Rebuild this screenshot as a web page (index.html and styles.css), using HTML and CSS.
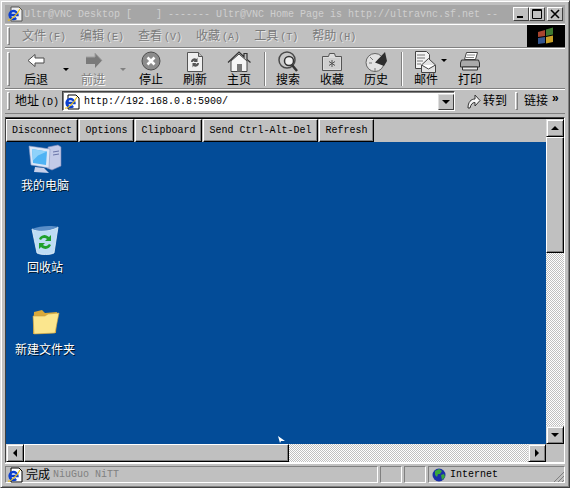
FILE: index.html
```html
<!DOCTYPE html>
<html lang="zh">
<head>
<meta charset="utf-8">
<title>Ultr@VNC Desktop</title>
<link rel="stylesheet" href="styles.css">
</head>
<body>
<div class="window">
  <header class="titlebar">
    <svg class="ie-small" viewBox="0 0 16 16"><path d="M4 1h8l3 3v11H4z" fill="#eee" stroke="#555"/><use href="#ie"/></svg>
    <span class="title-text">Ultr@VNC Desktop [    ] ------- Ultr@VNC Home Page is http://ultravnc.sf.net --</span>
    <div class="caption">
      <span class="cap-btn"><svg viewBox="0 0 14 12"><rect x="3" y="8" width="6" height="2" fill="#000"/></svg></span>
      <span class="cap-btn"><svg viewBox="0 0 14 12"><path d="M2.500 1.500h9v9h-9z M2 2.500h10" fill="none" stroke="#000"/></svg></span>
      <span class="cap-btn cap-close"><svg viewBox="0 0 14 12"><path d="M3 2l8 8M11 2l-8 8" stroke="#000" stroke-width="1.600"/></svg></span>
    </div>
  </header>

  <nav class="menubar band">
    <i class="grip"></i>
    <div class="menus">
      <span class="menu">文件<em>(F)</em></span>
      <span class="menu">编辑<em>(E)</em></span>
      <span class="menu">查看<em>(V)</em></span>
      <span class="menu">收藏<em>(A)</em></span>
      <span class="menu">工具<em>(T)</em></span>
      <span class="menu">帮助<em>(H)</em></span>
    </div>
    <div class="flag">
      <svg viewBox="0 0 20 20" width="20" height="20"><path d="M2 6l7-2v6l-7 1z" fill="#a8452f"/><path d="M10 3.500l7-2v7l-7 1.500z" fill="#3f7a32"/><path d="M2 12l7-1v6l-7 1z" fill="#34558f"/><path d="M10 11l7-1.500v6.500l-7 1.500z" fill="#c8a028"/></svg>
    </div>
  </nav>

  <section class="toolbar band">
    <i class="grip"></i>
    <div class="tool wide">
      <svg viewBox="0 0 24 22"><path d="M11 3.500L4 9.500l7 6v-3.500h9V7h-9z" fill="#fff" stroke="#4a4a4a"/></svg>
      <span>后退</span><b class="drop"></b>
    </div>
    <div class="tool wide off">
      <svg viewBox="0 0 24 22"><path d="M14 2l7 7.500-7 7.500v-4H5V6h9z" fill="#7a7a7a"/><path d="M5 6h9V2l7 7.500" fill="none" stroke="#a0a0a0"/></svg>
      <span>前进</span><b class="drop"></b>
    </div>
    <div class="tool">
      <svg viewBox="0 0 24 22"><circle cx="12" cy="10" r="9" fill="#8c8c8c" stroke="#4d4d4d"/><path d="M8.500 6.500l7 7M15.500 6.500l-7 7" stroke="#fff" stroke-width="2.600"/></svg>
      <span>停止</span>
    </div>
    <div class="tool">
      <svg viewBox="0 0 24 22"><path d="M4.500 1.500h11l4 4v15h-15z" fill="#efefef" stroke="#555"/><path d="M15.500 1.500v4h4" fill="#bbb" stroke="#555"/><path d="M8 11a3.500 3.500 0 0 1 5.500-3l1-1.500V11h-4l1.200-1.300a2 2 0 0 0-2 1.300M16 12a3.500 3.500 0 0 1-5.500 3l-1 1.500V12h4l-1.200 1.300a2 2 0 0 0 2-1.300" fill="#555"/></svg>
      <span>刷新</span>
    </div>
    <div class="tool">
      <svg viewBox="0 0 24 22"><path d="M4 10v10.500h16V10L12 3z" fill="#f5f5f5" stroke="#444"/><path d="M1 11.500L12 1l5 4.800V2.500h3v6l3.500 3" fill="none" stroke="#333" stroke-width="1.200"/><rect x="10" y="13" width="5" height="7.500" fill="#777"/></svg>
      <span>主页</span>
    </div>
    <i class="sep"></i>
    <div class="tool">
      <svg viewBox="0 0 24 22"><circle cx="11" cy="9" r="8" fill="#c8c8c8" stroke="#4a4a4a" stroke-width="1.500"/><circle cx="13" cy="10" r="4.500" fill="#eee" stroke="#333" stroke-width="1.500"/><path d="M16 14l5 6" stroke="#333" stroke-width="2.500"/></svg>
      <span>搜索</span>
    </div>
    <div class="tool">
      <svg viewBox="0 0 24 22"><path d="M2.500 5.500h6l1-3h5l1 3h6v14h-19z" fill="#dcdcdc" stroke="#555"/><rect x="4" y="7" width="16" height="11" fill="#cfcfcf"/><path d="M12 9v7M9 10.500l6 4M15 10.500l-6 4" stroke="#555"/></svg>
      <span>收藏</span>
    </div>
    <div class="tool">
      <svg viewBox="0 0 24 22"><circle cx="11" cy="11.500" r="9" fill="#e2e2e2" stroke="#666"/><path d="M11 11.500L21 1l2 9-3 5z" fill="#2d2d2d"/><path d="M5 12h3M11 17v3M6 6l3 3" stroke="#777"/></svg>
      <span>历史</span>
    </div>
    <i class="sep"></i>
    <div class="tool mail">
      <svg viewBox="0 0 24 22"><path d="M1.500 .500h11l3 3v14h-14z" fill="#f2f2f2" stroke="#444"/><path d="M3 4h8M3 7h8M3 10h6M3 13h4" stroke="#777"/><path d="M7.500 14l7-6.500 7 6.500v7.500h-14z" fill="#e2e2e2" stroke="#444"/><path d="M7.500 14l7 4 7-4" fill="#fff" stroke="#444"/></svg>
      <span>邮件</span><b class="drop"></b>
    </div>
    <div class="tool">
      <svg viewBox="0 0 24 22"><path d="M8.500 1.500h11l-2 7h-11z" fill="#fff" stroke="#444"/><path d="M9 4h8M8 6.500h8" stroke="#888"/><path d="M3.500 9h17l1 3v4h-19v-4z" fill="#aaa" stroke="#333"/><path d="M4.500 16h15v3h-15z" fill="#e8e8e8" stroke="#333"/></svg>
      <span>打印</span>
    </div>
  </section>

  <section class="addressbar band">
    <i class="grip"></i>
    <span class="addr-label">地址<em>(D)</em></span>
    <div class="addr-box">
      <svg class="ie-page" viewBox="0 0 16 16"><path d="M4 1h8l3 3v11H4z" fill="#fff" stroke="#000"/><use href="#ie"/></svg>
      <span class="url">http://192.168.0.8:5900/</span>
      <span class="combo"><b></b></span>
    </div>
    <span class="go"><svg viewBox="0 0 16 16" width="16" height="16"><path d="M2 15c0-6 3-9 7-9V2l5 5.500L9 13V9.500c-3 0-4 2-5 5.500z" fill="#f5f5f5" stroke="#333"/></svg><span>转到</span></span>
    <i class="grip grip-links"></i>
    <span class="links">链接</span><span class="chev">»</span>
  </section>

  <main class="frame">
    <div class="view">
      <div class="vnc-bar">
        <button class="vnc-btn">Disconnect</button>
        <button class="vnc-btn">Options</button>
        <button class="vnc-btn">Clipboard</button>
        <button class="vnc-btn">Send Ctrl-Alt-Del</button>
        <button class="vnc-btn">Refresh</button>
      </div>
      <div class="desktop">
        <div class="icon icon-pc">
          <svg viewBox="0 0 34 32"><path d="M20 4l10-2 3 2v19l-9 4-5-2z" fill="#c3cae8" stroke="#7b86b8" stroke-width=".6"/><path d="M25 9l6-1M25 12l6-1" stroke="#6a74a8"/><path d="M1 3l21 3-1 19-18-3z" fill="#dbe6f7" stroke="#8a9ac4" stroke-width=".6"/><path d="M4 6l15 2.500-1 13.500L5 20z" fill="#4fb3f4"/><path d="M4 6l15 2.500-9 4-5 5z" fill="#8fd2fa"/><path d="M7 24l9 1 5 5-15-1z" fill="#c8d0ea"/></svg>
          <span>我的电脑</span>
        </div>
        <div class="icon icon-bin">
          <svg viewBox="0 0 34 32"><path d="M4 4c7 3 19 2 26-2l-4 26c-4 2-13 2-17 0z" fill="#bddcf4" stroke="#e8f2fa" stroke-width=".8"/><path d="M4 4c7-3 19-4 26-2-8 4-19 5-26 2z" fill="#5a8ec8"/><path d="M11 14a6 6 0 0 1 10-2l2-2v6h-6l2-2a4 4 0 0 0-6 1zM23 20a6 6 0 0 1-10 2l-2 2v-6h6l-2 2a4 4 0 0 0 6-1z" fill="#1fa02c"/></svg>
          <span>回收站</span>
        </div>
        <div class="icon icon-folder">
          <svg viewBox="0 0 34 32"><path d="M6 5l8-2 3 3 12-1-1 21-23 1z" fill="#d9a93a"/><path d="M5 9h12l3-2 11-1-4 20-21 1z" fill="#fbe68e" stroke="#c9a040" stroke-width=".6"/></svg>
          <span>新建文件夹</span>
        </div>
        <svg class="pointer" viewBox="0 0 8 8"><path d="M0 0l7 5H3l-1 2z" fill="#fff"/></svg>
      </div>
    </div>
    <div class="vscroll">
      <span class="arrow"><b class="tri-up"></b></span>
      <span class="vthumb"></span>
      <span class="dither"></span>
      <span class="arrow"><b class="tri-down"></b></span>
    </div>
    <div class="hscroll">
      <span class="arrow"><b class="tri-left"></b></span>
      <span class="hthumb"></span>
      <span class="dither"></span>
      <span class="arrow"><b class="tri-right"></b></span>
    </div>
    <div class="corner"></div>
  </main>

  <footer class="statusbar">
    <div class="st-main">
      <svg class="ie-page" viewBox="0 0 16 16"><path d="M4 1h8l3 3v11H4z" fill="#fff" stroke="#000"/><use href="#ie"/></svg>
      <span class="st-done">完成</span>
      <span class="st-note">NiuGuo NiTT</span>
    </div>
    <div class="st-cell"></div>
    <div class="st-cell"></div>
    <div class="st-zone">
      <svg viewBox="0 0 14 14" width="14" height="14"><circle cx="7" cy="7" r="6.500" fill="#1a2fa8"/><path d="M3 3l4-2 3 2-2 3-2 0-1 3-2-2zM9 7l3-1 1 3-3 3z" fill="#3aa83a"/></svg>
      <span>Internet</span>
      <svg class="sizer" viewBox="0 0 12 12"><path d="M2 12L12 2M6 12l6-6M10 12l2-2" stroke="#808080"/></svg>
    </div>
  </footer>
</div>

<svg class="defs" width="0" height="0">
  <defs>
    <g id="ie">
      <path d="M3 9h7.500a4 4 0 1 0-1.300 3" fill="none" stroke="#0a3fd0" stroke-width="2.400"/>
      <path d="M1 14c2 1 9-5 12-11" fill="none" stroke="#e8c020" stroke-width="1.200"/>
    </g>
  </defs>
</svg>
</body>
</html>
```

FILE: styles.css
```css
* { box-sizing: border-box; }
html, body { margin: 0; padding: 0; }
body { width: 570px; height: 488px; overflow: hidden; background: #c0c0c0; font-family: "Noto Sans CJK SC", "Liberation Sans", sans-serif; font-size: 12px; color: #000; }
em { font-style: normal; }
.defs { position: absolute; }

.window { width: 570px; height: 488px; display: flex; flex-direction: column; padding: 4px; border: 1px solid; border-color: #dfdfdf #404040 #404040 #dfdfdf; box-shadow: inset 1px 1px 0 #fff, inset -1px -1px 0 #808080; background: #c0c0c0; }

.titlebar { height: 18px; flex: none; background: #a6a6a6; display: flex; align-items: center; padding: 0 2px; color: #cfcfcf; font-family: "Liberation Mono", monospace; font-size: 10px; white-space: pre; }
.ie-small { width: 16px; height: 16px; flex: none; }
.title-text { margin-left: 1px; flex: 1; overflow: hidden; }
.caption { display: flex; flex: none; }
.cap-btn { width: 16px; height: 14px; background: #c0c0c0; border: 1px solid; border-color: #fff #404040 #404040 #fff; display: flex; }
.cap-btn svg { width: 14px; height: 12px; }
.cap-close { margin-left: 2px; }

.band { flex: none; display: flex; align-items: center; border-top: 1px solid #fff; border-bottom: 1px solid #808080; }
.grip { flex: none; width: 3px; height: 18px; margin: 0 0 0 2px; border: 1px solid; border-color: #fff #808080 #808080 #fff; }

.menubar { height: 24px; margin-top: 1px; }
.menus { display: flex; flex: 1; gap: 14px; margin: -4px 0 0 12px; color: #7b7b7b; text-shadow: 1px 1px 0 #e6e6e6; }
.menu em { font-family: "Liberation Mono", monospace; font-size: 10px; margin-left: 2px; }
.flag { width: 38px; height: 22px; background: #000; display: flex; align-items: center; justify-content: center; }

.toolbar { height: 41px; }
.toolbar .grip { height: 34px; }
.tool { flex: none; width: 44px; display: flex; flex-direction: column; align-items: center; position: relative; font-size: 12px; line-height: 14px; }
.tool svg { width: 24px; height: 22px; margin-bottom: 1px; }
.tool span { margin-top: -2px; }
.tool.wide { width: 58px; padding-right: 14px; margin-left: -1px; }
.tool.wide:first-of-type { margin-left: 4px; }
.tool.mail { margin-left: 1px; }
.off { color: #808080; text-shadow: 1px 1px 0 #fff; }
.drop { position: absolute; right: 3px; top: 17px; width: 0; height: 0; border: 3px solid transparent; border-top: 3px solid #000; border-bottom: 0; }
.off .drop { border-top-color: #808080; }
.mail .drop { right: 1px; top: 8px; }
.sep { flex: none; width: 2px; height: 34px; border-left: 1px solid #808080; border-right: 1px solid #fff; margin: 0 0 0 3px; }

.addressbar { height: 25px; padding-bottom: 1px; white-space: nowrap; }
.addr-label { margin: -4px 0 0 5px; width: 47px; flex: none; }
.addr-label em { font-family: "Liberation Mono", monospace; font-size: 10px; margin-left: 2px; }
.addr-box { width: 393px; flex: none; height: 20px; display: flex; align-items: center; background: #fff; border: 1px solid; border-color: #404040 #fff #fff #404040; box-shadow: inset 1px 1px 0 #808080; padding: 1px 0 0 1px; }
.ie-page { width: 16px; height: 16px; flex: none; }
.url { flex: 1; margin-left: 4px; font-family: "Liberation Mono", monospace; font-size: 10px; }
.combo { width: 16px; height: 16px; background: #c0c0c0; border: 1px solid; border-color: #dfdfdf #404040 #404040 #dfdfdf; display: flex; align-items: center; justify-content: center; }
.combo b, .tri-down { width: 0; height: 0; border: 4px solid transparent; border-top: 4px solid #000; border-bottom: 0; }
.go { flex: none; display: flex; align-items: center; margin-left: 11px; width: 49px; gap: 1px; }
.go span { margin-top: -4px; }
.grip-links { margin-left: 0; }
.links { margin: -4px 0 0 6px; }
.chev { margin-left: 4px; font-weight: 700; font-size: 12px; line-height: 12px; margin-top: -6px; font-family: "Liberation Sans", sans-serif; }

.frame { margin-top: 3px; flex: none; height: 346px; display: grid; grid-template-columns: 1fr 18px; grid-template-rows: 1fr 18px; border: 1px solid; border-color: #404040 #fff #fff #404040; box-shadow: inset 0 1px 0 #000; padding: 1px 0 0 0; }
.view { display: flex; flex-direction: column; min-width: 0; min-height: 0; }
.vnc-bar { height: 23px; flex: none; display: flex; background: #c0c0c0; }
.vnc-btn { margin: 0 1px 0 0; padding: 0 5.5px; flex: none; height: 23px; font-family: "Liberation Mono", monospace; font-size: 10px; color: #000; background: #c0c0c0; border: 1px solid; border-color: #fff #000 #000 #fff; box-shadow: inset -1px -1px 0 #808080; border-radius: 0; }
.vnc-btn:first-child { padding: 0 5px; }
.desktop { flex: 1; position: relative; background: #034c98; color: #fff; }
.icon { position: absolute; width: 76px; display: flex; flex-direction: column; align-items: center; line-height: 14px; text-shadow: 1px 1px 0 #012; }
.icon svg { width: 34px; height: 32px; margin-bottom: 3px; }
.icon-pc { left: 1px; top: 1px; }
.icon-bin { left: 1px; top: 83px; }
.icon-folder { left: 1px; top: 165px; }
.pointer { position: absolute; left: 272px; bottom: 0; width: 8px; height: 8px; }

.arrow { flex: none; width: 18px; height: 18px; background: #c0c0c0; border: 1px solid; border-color: #dfdfdf #000 #000 #dfdfdf; box-shadow: inset 1px 1px 0 #fff, inset -1px -1px 0 #808080; display: flex; align-items: center; justify-content: center; }
.tri-up { width: 0; height: 0; border: 4px solid transparent; border-bottom: 4px solid #000; border-top: 0; }
.tri-left { width: 0; height: 0; border: 4px solid transparent; border-right: 4px solid #000; border-left: 0; }
.tri-right { width: 0; height: 0; border: 4px solid transparent; border-left: 4px solid #000; border-right: 0; }
.dither { flex: 1; background: repeating-conic-gradient(#c0c0c0 0 25%, #fff 0 50%) 0 0 / 2px 2px; }
.vscroll { display: flex; flex-direction: column; }
.hscroll { display: flex; }
.vthumb { flex: none; height: 116px; background: #c0c0c0; border: 1px solid; border-color: #fff #000 #000 #fff; box-shadow: inset -1px -1px 0 #808080; }
.hthumb { flex: none; width: 265px; background: #c0c0c0; border: 1px solid; border-color: #fff #000 #000 #fff; box-shadow: inset -1px -1px 0 #808080; }
.corner { background: #c0c0c0; }

.statusbar { flex: none; height: 20px; display: flex; gap: 2px; border-top: 1px solid #fff; padding-top: 2px; }
.st-main { flex: none; width: 373px; display: flex; align-items: center; border: 1px solid; border-color: #808080 #fff #fff #808080; padding-left: 1px; }
.st-done { margin: -3px 0 0 3px; }
.st-note { margin-left: 3px; font-family: "Liberation Mono", monospace; font-size: 10px; color: #808080; }
.st-cell { flex: none; width: 22px; border: 1px solid; border-color: #808080 #fff #fff #808080; }
.st-zone { flex: 1; position: relative; display: flex; align-items: center; gap: 4px; padding-left: 3px; border: 1px solid; border-color: #808080 #fff #fff #808080; font-family: "Liberation Mono", monospace; font-size: 10px; }
.sizer { position: absolute; right: 0; bottom: 0; width: 12px; height: 12px; }
```
